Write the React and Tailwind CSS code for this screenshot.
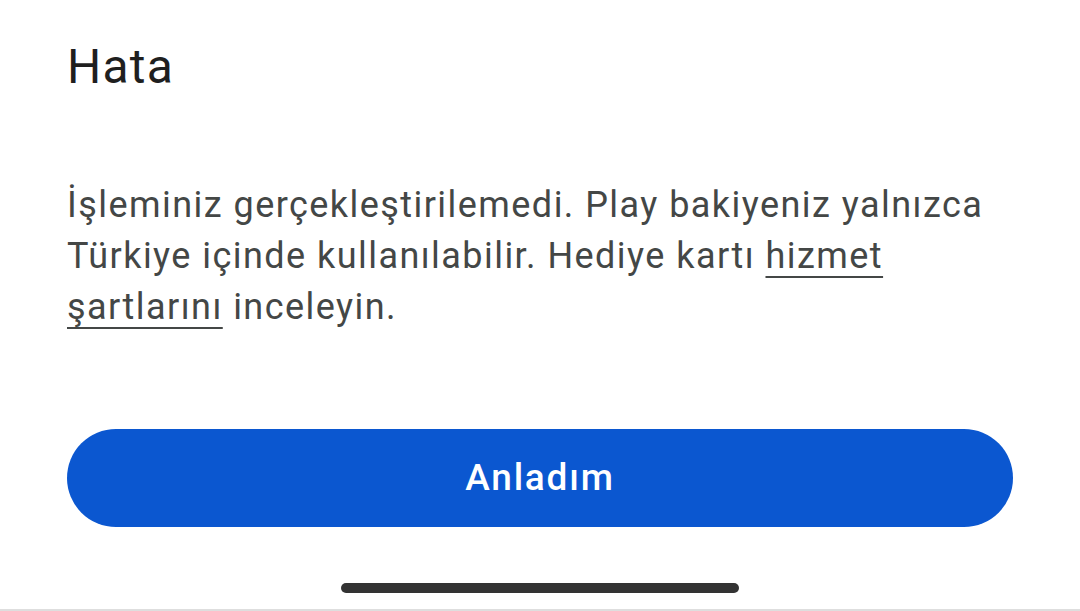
export default function App() {
  return (
    <main
      className="h-[611px] w-full bg-white flex flex-col overflow-hidden"
      style={{ fontFamily: "Roboto, 'Noto Sans', sans-serif" }}
    >
      <section className="flex-1 flex flex-col px-[67px]">
        {/* Dialog title */}
        <h1 className="mt-[39px] text-[48px] leading-[56px] tracking-[1.2px] text-[#1f1f1f] font-normal">Hata</h1>

        {/* Message */}
        <p className="mt-[85px] text-[36px] leading-[51px] tracking-[1.45px] text-[#444746] whitespace-nowrap">
          İşleminiz gerçekleştirilemedi. Play bakiyeniz yalnızca
          <br />
          Türkiye içinde kullanılabilir. Hediye kartı{" "}
          <a href="#" className="underline decoration-2 underline-offset-[8px]">hizmet</a>
          <br />
          <a href="#" className="underline decoration-2 underline-offset-[8px]">şartlarını</a> inceleyin.
        </p>

        {/* Action */}
        <button className="mt-[96px] h-[98px] w-full rounded-full bg-[#0b57d0] text-white text-[37px] tracking-[1.8px] font-medium">
          Anladım
        </button>
      </section>

      {/* Gesture bar */}
      <div className="flex justify-center pb-[16px]">
        <div className="h-[10px] w-[398px] rounded-full bg-[#333333]" />
      </div>
      <div className="h-[2px] bg-[#dedede]" />
    </main>
  );
}
